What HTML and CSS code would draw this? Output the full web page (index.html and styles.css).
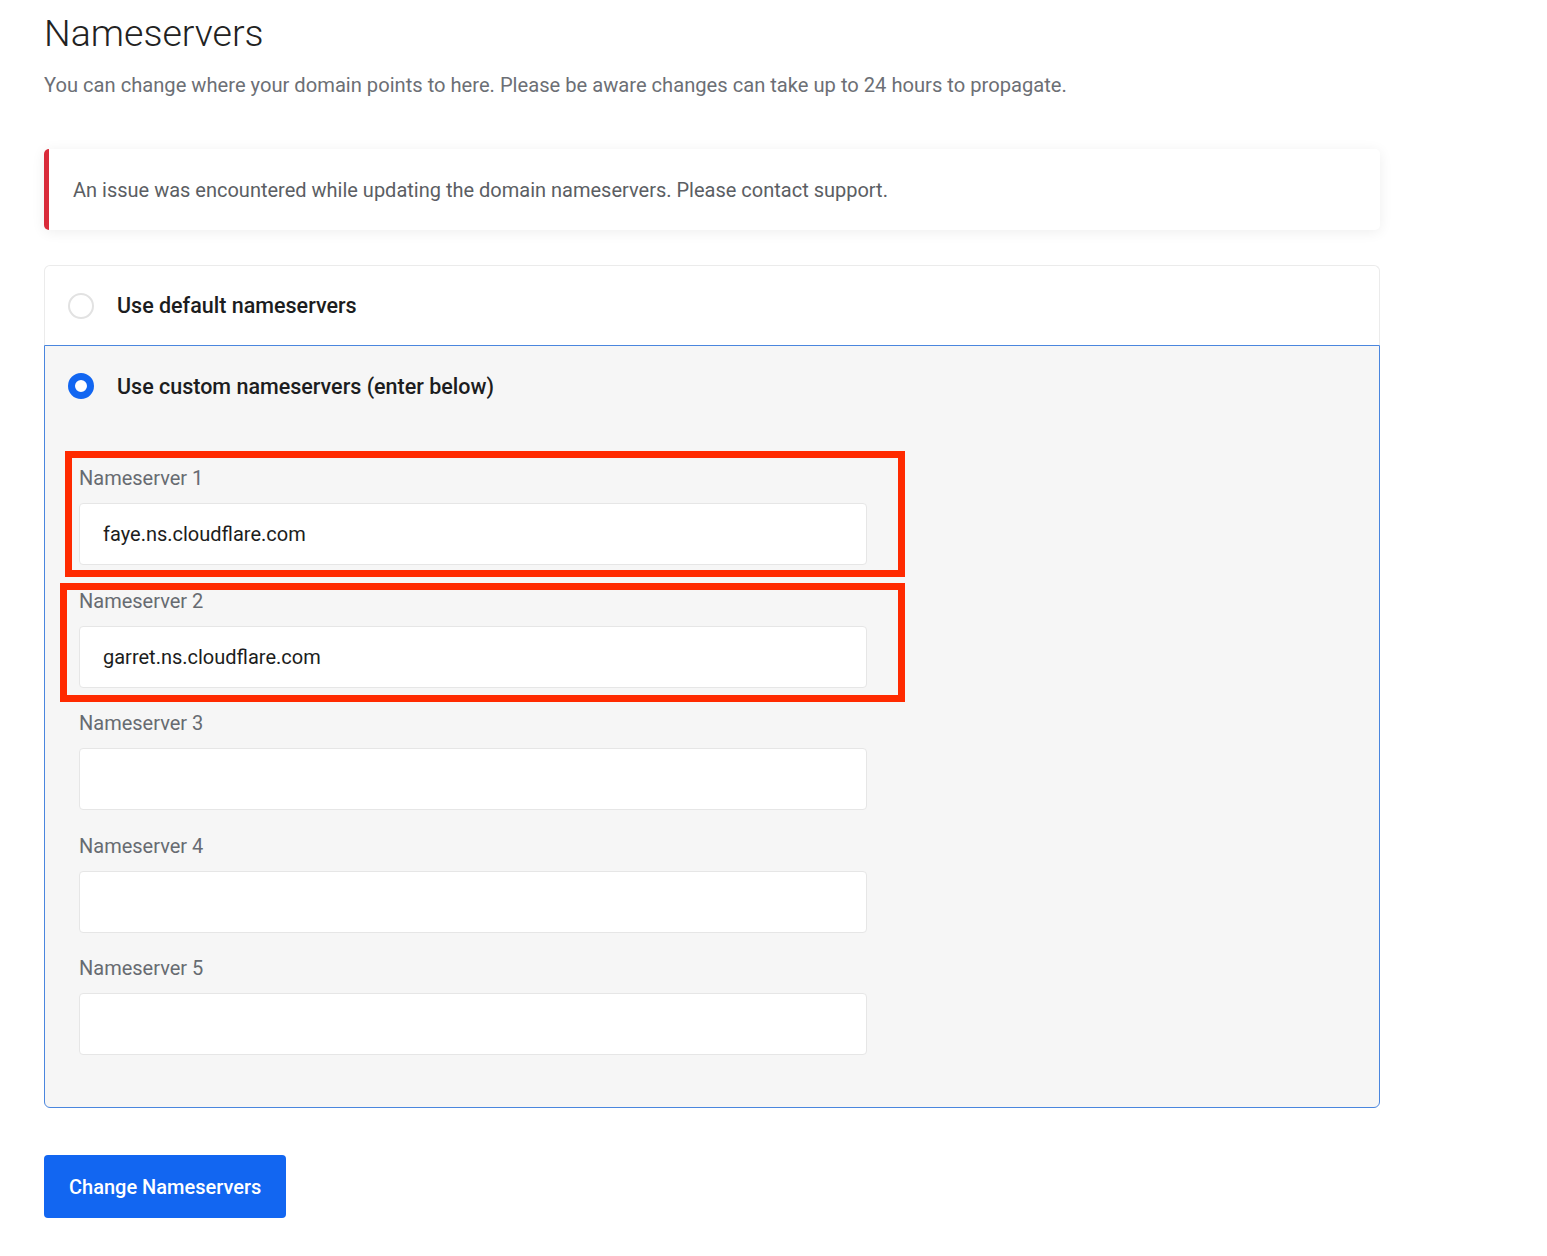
FILE: index.html
```html
<!DOCTYPE html>
<html lang="en">
  <head>
    <meta charset="UTF-8">
    <meta name="viewport" content="width=device-width, initial-scale=1.0">
    <title>Nameservers</title>
    <link rel="stylesheet" href="styles.css">
  </head>
  <body>
    <div id="page">
      <h1 class="title">Nameservers</h1>
      <p class="lead">You can change where your domain points to here. Please be aware changes can take up to 24 hours to propagate.</p>

      <div class="alert">An issue was encountered while updating the domain nameservers. Please contact support.</div>

      <div class="choices">
        <label class="option">
          <span class="radio"></span>
          <span class="option-text">Use default nameservers</span>
        </label>
        <div class="option-custom">
          <label class="option">
            <span class="radio checked"></span>
            <span class="option-text">Use custom nameservers (enter below)</span>
          </label>
          <div class="fields">
            <div class="field">
              <span class="mark mark-one"></span>
              <div class="field-label">Nameserver 1</div>
              <input class="field-input" type="text" value="faye.ns.cloudflare.com">
            </div>
            <div class="field">
              <span class="mark mark-two"></span>
              <div class="field-label">Nameserver 2</div>
              <input class="field-input" type="text" value="garret.ns.cloudflare.com">
            </div>
            <div class="field">
              <div class="field-label">Nameserver 3</div>
              <input class="field-input" type="text">
            </div>
            <div class="field">
              <div class="field-label">Nameserver 4</div>
              <input class="field-input" type="text">
            </div>
            <div class="field">
              <div class="field-label">Nameserver 5</div>
              <input class="field-input" type="text">
            </div>
          </div>
        </div>
      </div>

      <button class="submit">Change Nameservers</button>
    </div>
  </body>
</html>
```

FILE: styles.css
```css
* {
  box-sizing: border-box;
}
body {
  margin: 0;
  background-color: white;
  font-family: Roboto, "Liberation Sans", sans-serif;
  color: #212529;
}
#page {
  width: 1380px;
  padding-left: 44px;
  padding-bottom: 38px;
}
.title {
  margin: 10px 0 0;
  font-size: 37.5px;
  line-height: 46px;
  font-weight: 300;
  color: #222;
}
.lead {
  margin: 16px 0 0;
  font-size: 20.15px;
  line-height: 27px;
  color: #6c6f75;
}
.alert {
  margin-top: 50px;
  height: 81px;
  display: flex;
  align-items: center;
  padding-left: 24px;
  border-left: 5px solid #d92b3a;
  border-radius: 5px;
  background-color: white;
  box-shadow: 0 2px 14px rgba(0, 0, 0, 0.07);
  font-size: 20px;
  color: #5b5e63;
}
.choices {
  margin-top: 35px;
}
.option {
  display: flex;
  align-items: center;
  gap: 23px;
  height: 80px;
  padding: 0 23px;
  cursor: pointer;
}
.choices > .option {
  border: 1px solid #ebebeb;
  border-bottom: none;
  border-radius: 6px 6px 0 0;
}
.radio {
  width: 26px;
  height: 26px;
  border-radius: 50%;
  border: 2px solid #e2e2e2;
  background-color: white;
}
.radio.checked {
  border: 7px solid #1266f1;
}
.option-text {
  font-size: 21.5px;
  font-weight: 500;
  color: #1c1d20;
}
.option-custom {
  border: 1px solid #4a86de;
  border-radius: 0 0 6px 6px;
  background-color: #f6f6f6;
}
.fields {
  padding: 39px 0 52px 34px;
}
.field {
  position: relative;
  width: 788px;
  padding-bottom: 22.5px;
}
.field:last-child {
  padding-bottom: 0;
}
.field-label {
  font-size: 20px;
  line-height: 27px;
  margin-bottom: 11px;
  color: #676b71;
}
.field-input {
  display: block;
  width: 788px;
  height: 62px;
  padding: 0 23px;
  border: 1px solid #e6e6e6;
  border-radius: 4px;
  background-color: white;
  font-family: Roboto, "Liberation Sans", sans-serif;
  font-size: 20px;
  color: #1c1d20;
  outline: none;
}
/* red highlight boxes drawn over the first two fields */
.mark {
  position: absolute;
  border: 7px solid #ff2a00;
  pointer-events: none;
}
.mark-one {
  left: -14px;
  top: -14px;
  width: 840px;
  height: 126px;
}
.mark-two {
  left: -19px;
  top: -5px;
  width: 845px;
  height: 119px;
}
.submit {
  display: block;
  margin-top: 47px;
  height: 63px;
  padding: 0 25px;
  border: none;
  border-radius: 4px;
  background-color: #1266f1;
  color: white;
  font-family: Roboto, "Liberation Sans", sans-serif;
  font-size: 20px;
  font-weight: 500;
  cursor: pointer;
}
```
